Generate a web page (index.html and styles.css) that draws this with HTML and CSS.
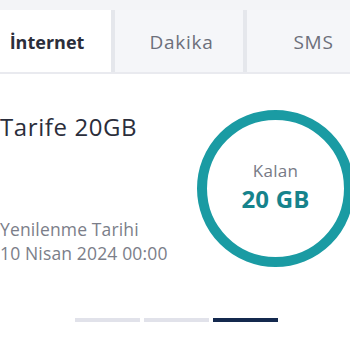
FILE: index.html
```html
<!DOCTYPE html>
<html lang="tr">
<head>
<meta charset="utf-8">
<link rel="stylesheet" href="styles.css">
</head>
<body>
<div class="page">
  <div class="tabs-wrap">
    <div class="tabs">
      <div class="tab active">İnternet</div>
      <div class="tab">Dakika</div>
      <div class="tab">SMS</div>
    </div>
  </div>
  <div class="main">
    <div class="info">
      <div class="title">Tarife 20GB</div>
      <div class="renew">
        <div class="renew-label">Yenilenme Tarihi</div>
        <div class="renew-date">10 Nisan 2024 00:00</div>
      </div>
    </div>
    <div class="ring">
      <div class="ring-label">Kalan</div>
      <div class="ring-value">20 GB</div>
    </div>
  </div>
  <div class="pager">
    <span class="bar"></span>
    <span class="bar"></span>
    <span class="bar current"></span>
  </div>
</div>
</body>
</html>
```
FILE: styles.css
```css
html, body {
  margin: 0;
  padding: 0;
  background: #ffffff;
  overflow: hidden;
}
body {
  width: 350px;
  height: 350px;
  font-family: "Open Sans", Lato, sans-serif;
}
.page {
  width: 350px;
  height: 350px;
  overflow: hidden;
}
.tabs-wrap {
  background: #f3f4f7;
  padding-top: 10px;
  border-bottom: 2px solid #e9eaef;
}
.tabs {
  display: flex;
  gap: 4px;
  margin-left: -17px;
  background: #e5e7ec;
  width: 400px;
}
.tab {
  flex: 0 0 128px;
  height: 62px;
  display: flex;
  align-items: center;
  justify-content: center;
  background: #f5f6f9;
  color: #6c6f7b;
  font-size: 19px;
  letter-spacing: 0.7px;
  padding-top: 1px;
  padding-left: 5px;
  box-sizing: border-box;
}
.tab.active {
  background: #ffffff;
  color: #2b2e3b;
  font-weight: 700;
  font-size: 18px;
  letter-spacing: 0;
  padding-left: 0;
}
.main {
  display: flex;
  margin-top: 36px;
  width: 360px;
}
.info {
  flex: 0 0 197px;
  display: flex;
  flex-direction: column;
  justify-content: space-between;
  padding-top: 3px;
  padding-bottom: 2px;
  box-sizing: border-box;
}
.title {
  font-size: 24px;
  color: #2b2e3b;
  line-height: 28px;
  letter-spacing: 0.6px;
}
.renew {
  font-size: 17.5px;
  color: #7b7e89;
  line-height: 24px;
  letter-spacing: 0.15px;
}
.ring {
  flex: 0 0 157px;
  width: 157px;
  height: 157px;
  box-sizing: border-box;
  border: 10px solid #1a9ba3;
  border-radius: 50%;
  display: flex;
  flex-direction: column;
  align-items: center;
  justify-content: center;
  padding-bottom: 4px;
}
.ring-label {
  font-size: 17px;
  color: #777a86;
  line-height: 24px;
  letter-spacing: 0.3px;
}
.ring-value {
  font-size: 24px;
  font-weight: 700;
  color: #16838c;
  line-height: 31px;
  letter-spacing: 0.2px;
}
.pager {
  display: flex;
  justify-content: center;
  gap: 4px;
  margin-top: 51px;
  padding-left: 2px;
}
.bar {
  width: 65px;
  height: 4px;
  background: #e1e2ea;
}
.bar.current {
  background: #14294e;
}
```
